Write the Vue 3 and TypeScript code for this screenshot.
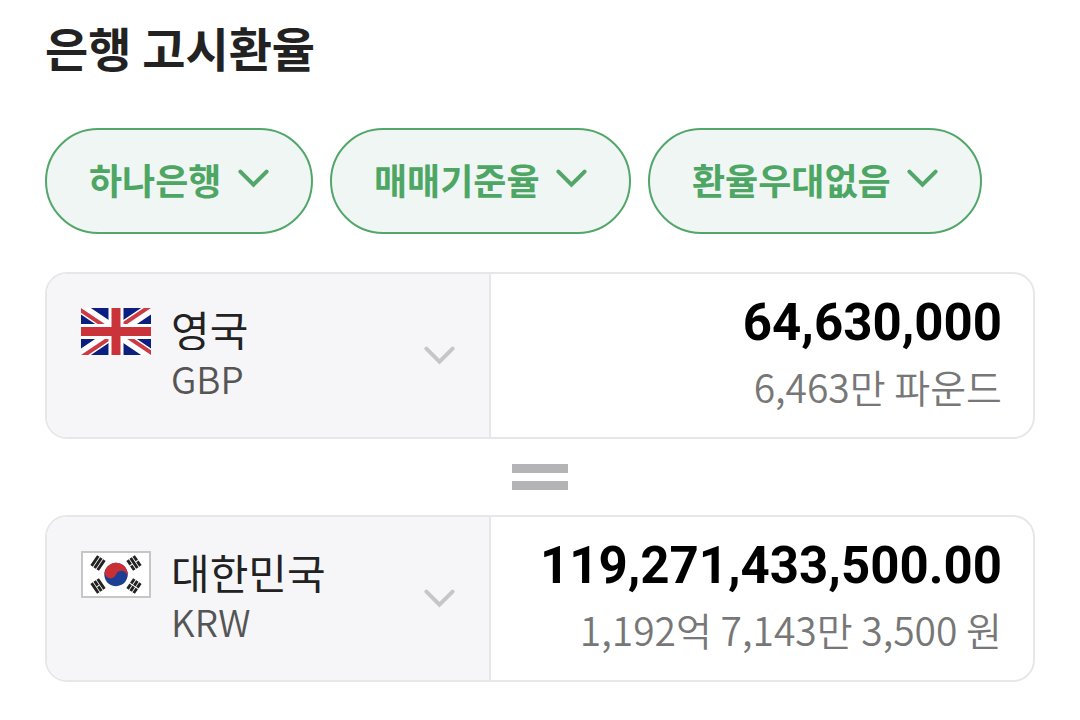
<script setup lang="ts">
import { ref } from 'vue'

interface Filter {
  id: string
  label: string
  value: string
}

interface Currency {
  code: string
  country: string
  amount: string
  reading: string
}

const filters = ref<Filter[]>([
  { id: 'bank', label: '은행', value: '하나은행' },
  { id: 'rate', label: '환율 기준', value: '매매기준율' },
  { id: 'discount', label: '환율우대', value: '환율우대없음' },
])

const currencies = ref<Currency[]>([
  { code: 'GBP', country: '영국', amount: '64,630,000', reading: '6,463만 파운드' },
  { code: 'KRW', country: '대한민국', amount: '119,271,433,500.00', reading: '1,192억 7,143만 3,500 원' },
])

// Corner positions and rotations of the four trigrams; 1 = solid bar, 0 = broken bar.
const trigrams = [
  { x: 17, y: 12, angle: -56, bars: [1, 1, 1] },
  { x: 53, y: 12, angle: 56, bars: [0, 1, 0] },
  { x: 17, y: 35, angle: 56, bars: [1, 0, 1] },
  { x: 53, y: 35, angle: -56, bars: [0, 0, 0] },
]
</script>

<template>
  <main class="page">
    <h1 class="title">은행 고시환율</h1>

    <div class="filters">
      <label v-for="f in filters" :key="f.id" class="pill">
        <select v-model="f.value" :aria-label="f.label" class="pill-select">
          <option>{{ f.value }}</option>
        </select>
        <svg class="chevron" viewBox="0 0 31 20" aria-hidden="true">
          <path d="M2.4 2.6 15.5 15.6 28.6 2.6" />
        </svg>
      </label>
    </div>

    <template v-for="(c, i) in currencies" :key="c.code">
      <div v-if="i > 0" class="equals" role="img" aria-label="="></div>
      <section class="card">
        <label class="country">
          <svg v-if="c.code === 'GBP'" class="flag" viewBox="0 0 70 47" aria-hidden="true">
            <clipPath id="uk-saltire">
              <path d="M35 23.5H70V47zM35 23.5V47H0zM35 23.5H0V0zM35 23.5V0H70z" />
            </clipPath>
            <rect width="70" height="47" fill="#0b1f80" />
            <path d="M0 0 70 47M70 0 0 47" stroke="#fff" stroke-width="11" />
            <path d="M0 0 70 47M70 0 0 47" stroke="#cc3a44" stroke-width="8" clip-path="url(#uk-saltire)" />
            <path d="M35 0V47M0 23.5H70" stroke="#fff" stroke-width="15" />
            <path d="M35 0V47M0 23.5H70" stroke="#cb333b" stroke-width="9" />
          </svg>
          <svg v-else class="flag" viewBox="0 0 70 47" aria-hidden="true">
            <rect x="1" y="1" width="68" height="45" fill="#fff" stroke="#c6c6c8" stroke-width="2" />
            <g transform="rotate(20 35 23.5)">
              <circle cx="35" cy="23.5" r="11.7" fill="#1c3f94" />
              <path
                d="M23.3 23.5a11.7 11.7 0 0 1 23.4 0a5.85 5.85 0 0 0-11.7 0a5.85 5.85 0 0 1-11.7 0z"
                fill="#cb2f36"
              />
            </g>
            <g
              v-for="(t, n) in trigrams"
              :key="n"
              :transform="`translate(${t.x} ${t.y}) rotate(${t.angle})`"
              stroke="#222"
              stroke-width="2.9"
            >
              <path
                v-for="(solid, b) in t.bars"
                :key="b"
                :d="solid ? `M-6 ${(b - 1) * 3.7}h12` : `M-6 ${(b - 1) * 3.7}h5.5m1 0h5.5`"
              />
            </g>
          </svg>
          <select v-model="c.country" class="country-select">
            <option>{{ c.country }}</option>
          </select>
          <span class="code">{{ c.code }}</span>
          <svg class="chevron muted" viewBox="0 0 31 20" aria-hidden="true">
            <path d="M2.4 2.6 15.5 15.6 28.6 2.6" />
          </svg>
        </label>
        <div class="value">
          <input v-model="c.amount" class="amount" inputmode="decimal" :aria-label="`${c.country} ${c.code}`" />
          <p class="reading">{{ c.reading }}</p>
        </div>
      </section>
    </template>
  </main>
</template>

<style>
body {
  margin: 0;
  background: #fff;
}
</style>

<style scoped>
.page {
  box-sizing: border-box;
  padding: 17px 45px 38px;
  font-family: 'Noto Sans CJK KR', sans-serif;
  color: #222;
}

.title {
  margin: 0 0 51px;
  font-size: 47px;
  line-height: 60px;
  font-weight: 700;
}

.filters {
  display: flex;
  gap: 17px;
  margin-bottom: 38px;
}

.pill {
  display: flex;
  align-items: center;
  gap: 16px;
  box-sizing: border-box;
  height: 106px;
  padding: 0 42px 4px;
  border: 2px solid #53a669;
  border-radius: 53px;
  background: #f0f6f4;
  color: #4ea664;
}

select,
input {
  appearance: none;
  margin: 0;
  padding: 0;
  border: 0;
  outline: 0;
  background: transparent;
  color: inherit;
  font-family: inherit;
}

.pill-select {
  font-size: 36px;
  line-height: 52px;
  font-weight: 700;
}

.chevron {
  width: 31px;
  height: 20px;
  flex: none;
  fill: none;
  stroke: #53a669;
  stroke-width: 4;
  stroke-linecap: round;
}

.card {
  display: grid;
  grid-template-columns: 9fr 11fr;
  border: 2px solid #e7e7ea;
  border-radius: 22px;
  overflow: hidden;
}

.country {
  display: grid;
  grid-template-columns: 70px 1fr 31px;
  grid-template-rows: 47px 45px;
  column-gap: 20px;
  padding: 34px 34px 37px 34px;
  border-right: 2px solid #e7e7ea;
  background: #f6f6f9;
}

.flag {
  width: 70px;
  height: 47px;
}

.country-select {
  min-width: 0;
  height: 42px;
  font-size: 42px;
  line-height: 42px;
}

.code {
  grid-column: 2;
  grid-row: 2;
  font-size: 37px;
  line-height: 46px;
  font-weight: 350;
  color: #555;
}

.muted {
  grid-column: 3;
  grid-row: 1 / 3;
  align-self: center;
  margin-top: 4px;
  stroke: #c6c6c8;
}

.value {
  min-width: 0;
  padding: 21px 31px 0;
  text-align: right;
}

.amount {
  display: block;
  width: 100%;
  height: 56px;
  font-family: Roboto, sans-serif;
  font-size: 51px;
  line-height: 56px;
  font-weight: 700;
  text-align: right;
  color: #000;
}

.reading {
  margin: 7px 0 0;
  font-size: 39px;
  line-height: 56px;
  font-weight: 350;
  color: #777;
}

.equals {
  box-sizing: border-box;
  width: 56px;
  height: 26px;
  margin: 25px auto;
  border: solid #b4b4b7;
  border-width: 9px 0;
}
</style>
